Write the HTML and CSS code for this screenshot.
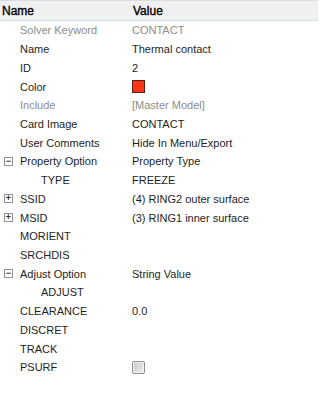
FILE: index.html
```html
<!DOCTYPE html>
<html>
<head>
<meta charset="utf-8">
<link rel="stylesheet" href="styles.css">
</head>
<body>
<div class="grid">
  <div class="header">
    <div class="hname">Name</div>
    <div class="hvalue">Value</div>
  </div>
  <div class="row muted"><div class="name"><span class="tg"></span>Solver Keyword</div><div class="value">CONTACT</div></div>
  <div class="row"><div class="name"><span class="tg"></span>Name</div><div class="value">Thermal contact</div></div>
  <div class="row"><div class="name"><span class="tg"></span>ID</div><div class="value">2</div></div>
  <div class="row"><div class="name"><span class="tg"></span>Color</div><div class="value"><span class="swatch"></span></div></div>
  <div class="row muted"><div class="name"><span class="tg"></span>Include</div><div class="value">[Master Model]</div></div>
  <div class="row"><div class="name"><span class="tg"></span>Card Image</div><div class="value">CONTACT</div></div>
  <div class="row"><div class="name"><span class="tg"></span>User Comments</div><div class="value">Hide In Menu/Export</div></div>
  <div class="row"><div class="name"><span class="tg box">&#8722;</span>Property Option</div><div class="value">Property Type</div></div>
  <div class="row"><div class="name indent"><span class="tg"></span>TYPE</div><div class="value">FREEZE</div></div>
  <div class="row"><div class="name"><span class="tg box">+</span>SSID</div><div class="value">(4) RING2 outer surface</div></div>
  <div class="row"><div class="name"><span class="tg box">+</span>MSID</div><div class="value">(3) RING1 inner surface</div></div>
  <div class="row"><div class="name"><span class="tg"></span>MORIENT</div><div class="value"></div></div>
  <div class="row"><div class="name"><span class="tg"></span>SRCHDIS</div><div class="value"></div></div>
  <div class="row"><div class="name"><span class="tg box">&#8722;</span>Adjust Option</div><div class="value">String Value</div></div>
  <div class="row"><div class="name indent"><span class="tg"></span>ADJUST</div><div class="value"></div></div>
  <div class="row"><div class="name"><span class="tg"></span>CLEARANCE</div><div class="value">0.0</div></div>
  <div class="row"><div class="name"><span class="tg"></span>DISCRET</div><div class="value"></div></div>
  <div class="row"><div class="name"><span class="tg"></span>TRACK</div><div class="value"></div></div>
  <div class="row"><div class="name"><span class="tg"></span>PSURF</div><div class="value"><span class="check"></span></div></div>
</div>
</body>
</html>
```
FILE: styles.css
```css
html, body {
  margin: 0;
  padding: 0;
  background: #ffffff;
}
body {
  font-family: "Liberation Sans", Arial, sans-serif;
  font-size: 11px;
  color: #1e1e1e;
  width: 320px;
  height: 407px;
  overflow: hidden;
}
.grid {
  display: flex;
  flex-direction: column;
}
.header {
  display: flex;
  height: 19px;
  background: #f0f0f0;
  border-top: 1px solid #dcdcdc;
  border-bottom: 1px solid #d5dde5;
  margin-right: 2px;
  align-items: center;
  font-size: 12px;
  color: #000;
  -webkit-text-stroke: 0.35px #000;
}
.hname {
  width: 129px;
  padding-left: 2px;
}
.hvalue {
  padding-left: 2px;
}
.row {
  display: flex;
  height: 18.72px;
  align-items: center;
}
.name {
  width: 127px;
  padding-left: 4px;
  display: flex;
  align-items: center;
  white-space: nowrap;
}
.name.indent {
  padding-left: 25px;
  width: 106px;
}
.value {
  padding-left: 1px;
  display: flex;
  align-items: center;
  white-space: nowrap;
}
.muted {
  color: #8c8c8c;
}
.tg {
  width: 9px;
  height: 9px;
  margin-right: 7px;
  flex: none;
  box-sizing: border-box;
}
.tg.box {
  border: 1px solid #919191;
  background: #fff;
  font-size: 9px;
  line-height: 7px;
  text-align: center;
  color: #333;
  font-weight: bold;
}
.swatch {
  width: 13px;
  height: 13px;
  box-sizing: border-box;
  border: 1px solid #5a1f14;
  background: #ff3415;
}
.check {
  width: 13px;
  height: 13px;
  box-sizing: border-box;
  border: 1px solid #8e8f8f;
  border-radius: 2px;
  background: linear-gradient(135deg, #c9c9c9, #efefef);
  box-shadow: inset 0 0 0 1px #f4f4f4;
}
```
